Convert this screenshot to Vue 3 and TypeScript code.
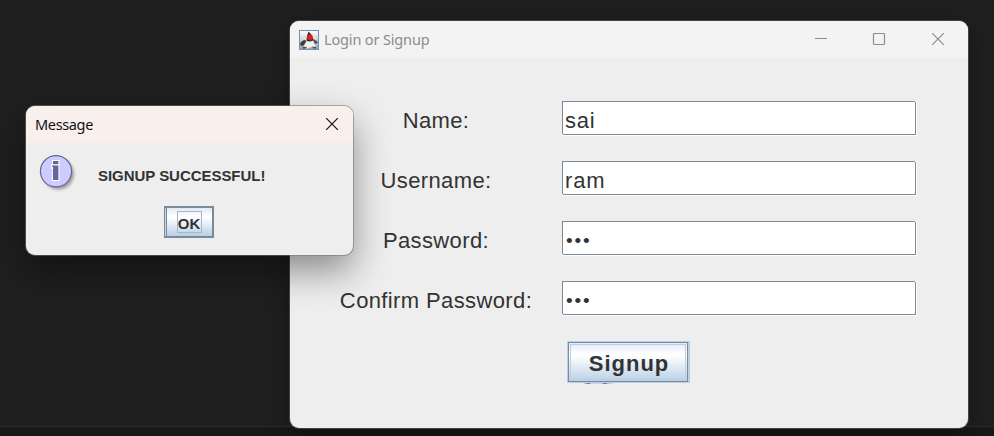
<script setup lang="ts">
import { ref } from 'vue'

interface Field {
  id: string
  label: string
  value: string
  secret: boolean
}

const fields = ref<Field[]>([
  { id: 'name', label: 'Name:', value: 'sai', secret: false },
  { id: 'username', label: 'Username:', value: 'ram', secret: false },
  { id: 'password', label: 'Password:', value: '•••', secret: true },
  { id: 'confirm', label: 'Confirm Password:', value: '•••', secret: true },
])
</script>

<template>
  <main class="desktop">
    <div class="taskbar"></div>

    <section class="window main-window">
      <header class="titlebar">
        <svg class="app-icon" width="20" height="20" viewBox="0 0 20 20">
          <defs>
            <linearGradient id="icon-bg" x1="0" y1="0" x2="0" y2="1">
              <stop offset="0" stop-color="#ffffff" />
              <stop offset="0.45" stop-color="#d5d9de" />
              <stop offset="1" stop-color="#8fa3b8" />
            </linearGradient>
            <filter id="soften"><feGaussianBlur stdDeviation="0.45" /></filter>
          </defs>
          <rect x="0.5" y="0.5" width="19" height="19" fill="url(#icon-bg)" stroke="#7192b4" />
          <g filter="url(#soften)">
            <path d="M1 14 L2 12 L5 10 L8 11 L7 15 L2 16Z" fill="#3c3c3c" />
            <path d="M14 9 L18 11 L19 13 L16 14 L13 12Z" fill="#555" />
            <path d="M8 10 L14 10 L17 18 L12 17 L7 19 L4 17Z" fill="#f1f1ef" />
            <path d="M9.5 1.5 L12 4 L14.5 10.5 L11 11.5 L7.5 11 L8 6Z" fill="#35302f" />
            <path d="M4 16.5 L8 17 L7 18.8 L3 18.5Z M13 16.5 L17 17 L17.5 18.5 L14 18.5Z" fill="#555" />
            <circle cx="11" cy="7.3" r="2.9" fill="#dc2018" />
          </g>
        </svg>
        <span class="title">Login or Signup</span>
        <svg class="controls" width="131" height="14" viewBox="0 0 131 14" fill="none" stroke="#8c8c8c">
          <path d="M0 5.5H12" />
          <rect x="58.5" y="0.5" width="11" height="11" rx="1" stroke-width="1.2" />
          <path d="M117.2 0.2L128.8 11.8M128.8 0.2L117.2 11.8" stroke-width="1.2" />
        </svg>
      </header>
      <form class="form" @submit.prevent>
        <template v-for="field in fields" :key="field.id">
          <span class="label" :class="'label-' + field.id">{{ field.label }}</span>
          <div class="input">
            <span :class="field.secret ? 'dots' : 'text'">{{ field.value }}</span>
          </div>
        </template>
        <div class="signup-cell">
          <button class="signup" type="submit">Signup</button>
          <div class="remnant"></div>
        </div>
      </form>
    </section>

    <section class="window dialog">
      <header class="titlebar">
        <span class="title">Message</span>
        <svg class="close" width="14" height="14" viewBox="0 0 14 14" fill="none" stroke="#111" stroke-width="1.2">
          <path d="M1.2 0.2L12.8 11.8M12.8 0.2L1.2 11.8" />
        </svg>
      </header>
      <div class="message">
        <svg class="info" width="40" height="42" viewBox="0 0 40 42">
          <defs>
            <filter id="info-shadow" x="-20%" y="-20%" width="150%" height="150%">
              <feGaussianBlur stdDeviation="1.5" />
            </filter>
          </defs>
          <circle cx="19.5" cy="20" r="15.5" fill="#777" opacity="0.65" filter="url(#info-shadow)" />
          <circle cx="17" cy="17.3" r="15.6" fill="#ccccff" stroke="#666699" stroke-width="1.2" />
          <path d="M13 6H20.5V27H13V24L13.5 15H12V10.5H13Z" fill="#fff" />
          <path d="M14 7H19.4V10.2H14Z M13 11.4H19.4V26H14V13H13Z" fill="#666699" />
        </svg>
        <span class="message-text">SIGNUP SUCCESSFUL!</span>
      </div>
      <button class="ok" type="button"><span class="focus">OK</span></button>
    </section>
  </main>
</template>

<style>
body {
  margin: 0;
  background: #1f1f1f;
}
</style>

<style scoped>
.desktop {
  position: relative;
  width: 994px;
  height: 436px;
  overflow: hidden;
  background: #1f1f1f;
  font-family: "Liberation Sans", Arial, sans-serif;
  color: #333;
}
.taskbar {
  position: absolute;
  left: 0;
  right: 0;
  bottom: 0;
  height: 10px;
  box-sizing: border-box;
  border-top: 1px solid #2b2b2b;
  background: #181818;
}
.window {
  position: absolute;
  border-radius: 9px;
  background: #eee;
}
.main-window {
  left: 290px;
  top: 21px;
  width: 678px;
  height: 407px;
  box-shadow: 0 0 0 1px #434343, 0 6px 22px rgba(0, 0, 0, 0.35);
}
.dialog {
  left: 26px;
  top: 106px;
  width: 327px;
  height: 149px;
  box-shadow: 0 0 0 1px rgba(115, 115, 115, 0.55), 0 16px 36px rgba(0, 0, 0, 0.42);
}
.titlebar {
  display: flex;
  align-items: center;
  height: 37px;
  box-sizing: border-box;
  border-radius: 9px 9px 0 0;
  font-family: "Noto Sans", "Open Sans", sans-serif;
}
.main-window .titlebar {
  padding: 0 22px 0 9px;
  background: #f3f3f3;
  color: #8c8c8c;
}
.dialog .titlebar {
  padding: 0 14px 0 9px;
  background: #f9f0ee;
  color: #111;
}
.title {
  padding-bottom: 2px;
  font-size: 14.5px;
  line-height: 20px;
  white-space: nowrap;
}
.main-window .title {
  margin-left: 5px;
  letter-spacing: -0.15px;
}
.dialog .title {
  letter-spacing: -0.35px;
}
.controls,
.close {
  margin-left: auto;
}
.form {
  display: grid;
  grid-template-columns: 192px 355px;
  grid-auto-rows: 35px;
  gap: 25px 30px;
  padding: 43px 0 0 50px;
}
.label {
  justify-self: center;
  font-size: 22px;
  line-height: 40px;
  letter-spacing: 0.38px;
  white-space: nowrap;
}
.input {
  position: relative;
  display: flex;
  box-sizing: border-box;
  width: 354px;
  height: 34px;
  border: 1px solid #7a8a99;
  background: #fff;
  box-shadow: 1px 1px 0 #fff;
}
/* Notched corners of the etched border */
.input::before,
.input::after {
  content: "";
  position: absolute;
  width: 1px;
  height: 1px;
  background: #fff;
}
.input::before {
  left: -1px;
  bottom: -1px;
}
.input::after {
  right: -1px;
  top: -1px;
}
.text {
  padding-left: 2px;
  font-size: 22px;
  line-height: 37px;
  letter-spacing: 0.8px;
}
.dots {
  padding-left: 3px;
  font-size: 19px;
  line-height: 37px;
  letter-spacing: 1.8px;
}
.signup-cell {
  grid-column: 2;
  padding-left: 5px;
}
.signup {
  display: block;
  box-sizing: border-box;
  width: 122px;
  height: 42px;
  padding: 3px 0 0 2px;
  border: 1px solid #b8cfe5;
  outline: 1px solid #b8cfe5;
  outline-offset: -4px;
  background: linear-gradient(#dfe9f4, #fff 30%, #fff 34%, #b8cfe5);
  box-shadow: inset 0 0 0 1px #7a8a99, 1px 0 0 #b8cfe5;
  color: #333;
  font: bold 22px/34px "Liberation Sans", Arial, sans-serif;
  letter-spacing: 1px;
}
.remnant {
  width: 32px;
  height: 1px;
  margin-left: 16px;
  background: linear-gradient(90deg, #eee, #666699 18%, #ccccff 25%, #ccccff 58%, #666699 67%, #bbb 78%, #eee);
}
.message {
  display: flex;
  align-items: flex-start;
  height: 63px;
  padding: 11px 0 0 13px;
  box-sizing: border-box;
}
.message-text {
  margin: 13px 0 0 19px;
  font-size: 15px;
  font-weight: bold;
  line-height: 18px;
  letter-spacing: -0.04px;
  white-space: nowrap;
}
.ok {
  display: flex;
  align-items: center;
  justify-content: center;
  box-sizing: border-box;
  width: 50px;
  height: 32px;
  margin-left: 138px;
  padding: 0;
  border: 2px solid #7a8a99;
  background: linear-gradient(#dfe9f4, #fff 30%, #fff 34%, #b8cfe5);
  box-shadow: inset 1px 0 0 #7a8a99;
  color: #333;
}
/* Light seam inside the left edge of the default button */
.ok {
  border-left: 1px solid #7a8a99;
  padding-left: 1px;
  box-shadow: inset 1px 0 0 #c5d3e0, inset 2px 0 0 #7a8a99;
}
.focus {
  box-sizing: border-box;
  width: 25px;
  height: 22px;
  padding-top: 2px;
  border: 1px solid #a3b8cc;
  font: bold 15px/20px "Liberation Sans", Arial, sans-serif;
}
</style>
